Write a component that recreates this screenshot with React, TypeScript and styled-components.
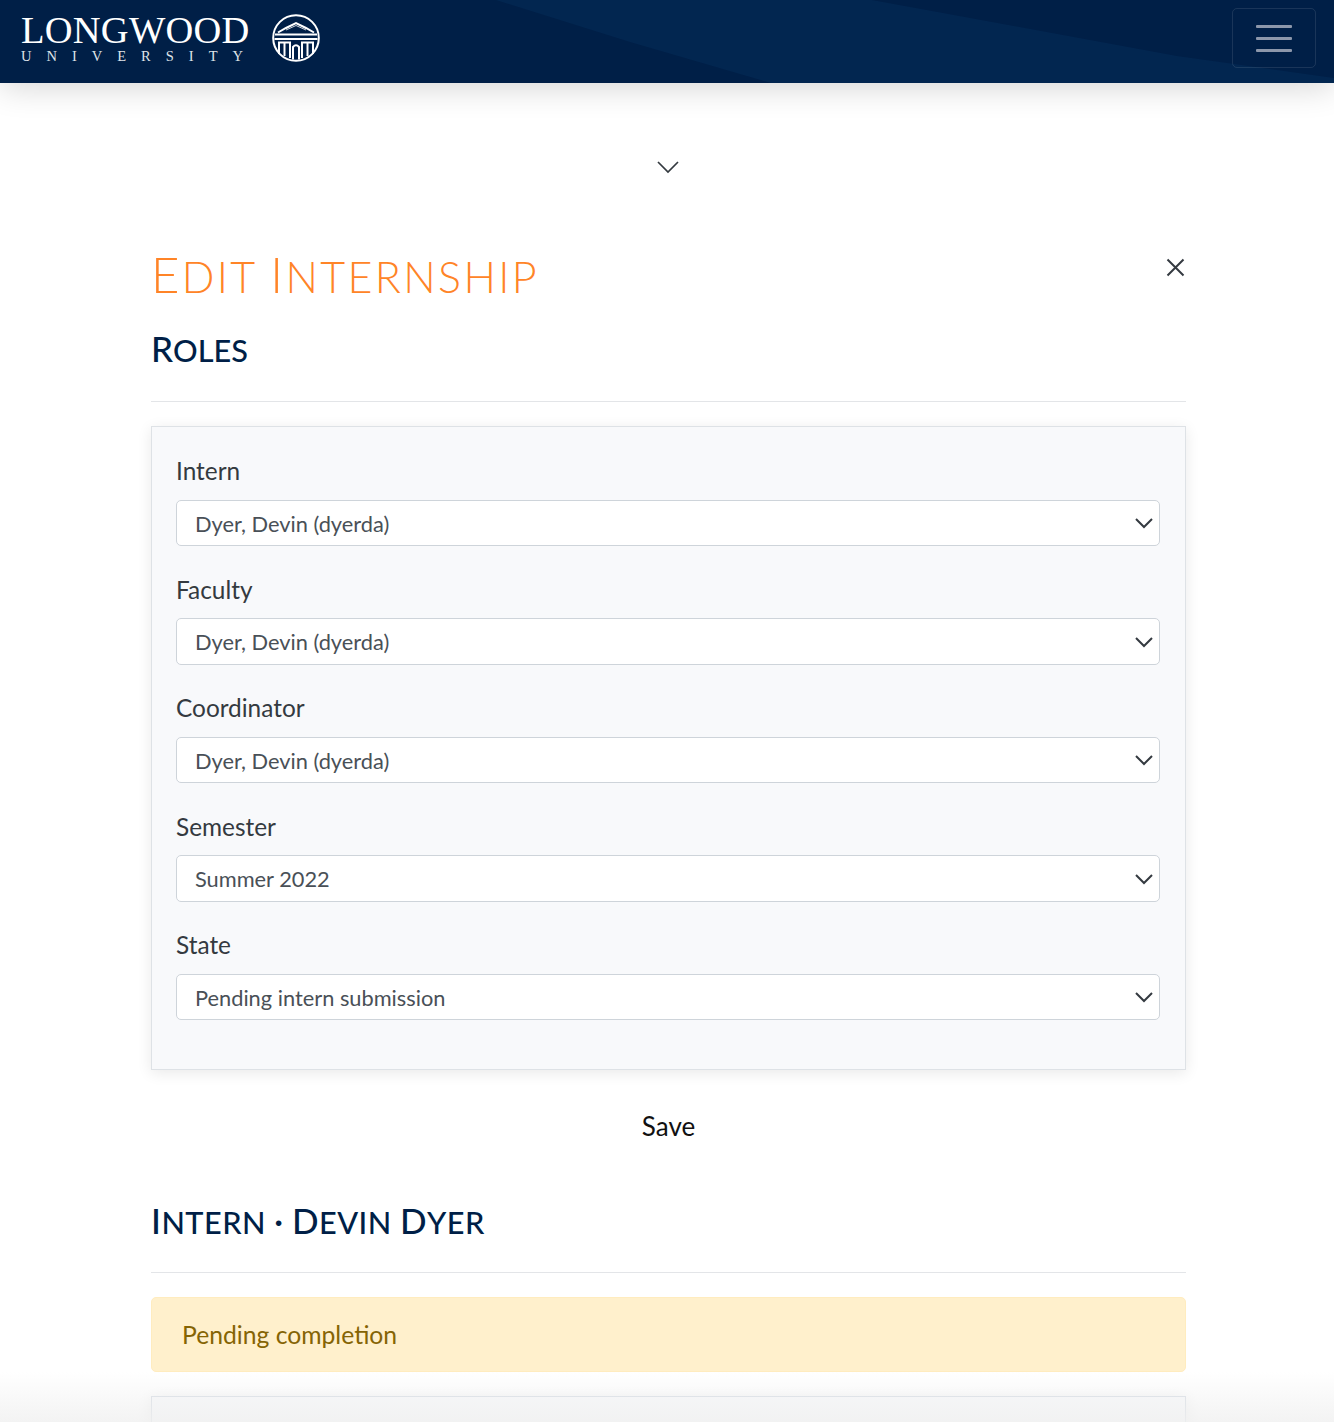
import React from 'react';
import styled, { createGlobalStyle } from 'styled-components';

type FieldData = {
  label: string;
  value: string;
};

const fields: FieldData[] = [
  { label: 'Intern', value: 'Dyer, Devin (dyerda)' },
  { label: 'Faculty', value: 'Dyer, Devin (dyerda)' },
  { label: 'Coordinator', value: 'Dyer, Devin (dyerda)' },
  { label: 'Semester', value: 'Summer 2022' },
  { label: 'State', value: 'Pending intern submission' },
];

function Seal() {
  return (
    <svg width='50' height='50' viewBox='0 0 50 50' fill='none' stroke='#fff'>
      <circle cx='25' cy='25' r='22.8' strokeWidth='2' />
      <path d='M7 19.5 L15 15 L25 10 L35 15 L43 19.5' strokeWidth='2' />
      <path d='M15 17 L25 12.5 L35 17' strokeWidth='0.8' />
      <path d='M4 21.5 H46 M3.5 26 H46.5' strokeWidth='2' />
      <path d='M8 41 V29.5 H19 V45 M13.5 29.5 V43' strokeWidth='2' />
      <path d='M42 41 V29.5 H31 V45 M36.5 29.5 V43' strokeWidth='2' />
      <path d='M22 46.5 V34 Q25 30.5 28 34 V46.5' strokeWidth='2' />
    </svg>
  );
}

function SmallCaps({ text }: { text: string }) {
  return (
    <>
      {text.split(' ').map((word, i) => (
        <React.Fragment key={i}>
          {i > 0 && ' '}
          <Cap>{word[0]}</Cap>
          {word.slice(1)}
        </React.Fragment>
      ))}
    </>
  );
}

function Field({ label, value }: FieldData) {
  return (
    <FieldWrap>
      <Label>{label}</Label>
      <SelectBox>
        <span>{value}</span>
        <svg width='18' height='12' viewBox='0 0 18 12' fill='none' stroke='#343a40' strokeWidth='2'>
          <path d='M1 2 L9 10 L17 2' />
        </svg>
      </SelectBox>
    </FieldWrap>
  );
}

export default function App() {
  return (
    <Page>
      <GlobalStyle />
      <Header>
        <Band />
        <Logo>
          <LogoText>
            <LogoName>LONGWOOD</LogoName>
            <LogoSub>UNIVERSITY</LogoSub>
          </LogoText>
          <Seal />
        </Logo>
        <Burger>
          <i />
          <i />
          <i />
        </Burger>
      </Header>
      <Toggle>
        <svg width='22' height='14' viewBox='0 0 22 14' fill='none' stroke='#343a40' strokeWidth='1.7'>
          <path d='M1 2 L11 12 L21 2' />
        </svg>
      </Toggle>
      <Main>
        <TitleRow>
          <Title>
            <SmallCaps text='Edit Internship' />
          </Title>
          <CloseIcon width='21' height='21' viewBox='0 0 21 21' fill='none' stroke='#343a40' strokeWidth='2'>
            <path d='M2.5 2.5 L18.5 18.5 M18.5 2.5 L2.5 18.5' />
          </CloseIcon>
        </TitleRow>
        <SectionHead>
          <SmallCaps text='Roles' />
        </SectionHead>
        <Divider />
        <Panel>
          {fields.map((f) => (
            <Field key={f.label} {...f} />
          ))}
        </Panel>
        <Save>Save</Save>
        <InternHead>
          <SmallCaps text='Intern · Devin Dyer' />
        </InternHead>
        <Divider />
        <Alert>Pending completion</Alert>
        <NextPanel />
      </Main>
      <BottomFade />
    </Page>
  );
}

const GlobalStyle = createGlobalStyle`
  html, body {
    margin: 0;
    padding: 0;
    background: #fff;
  }
  * {
    box-sizing: border-box;
  }
`;

const Page = styled.div`
  position: relative;
  height: 1422px;
  overflow: hidden;
  font-family: 'Lato', 'Noto Sans', sans-serif;
  color: #343a40;
`;

const Header = styled.header`
  position: relative;
  height: 83px;
  background: #001f47;
  box-shadow: 0 5px 32px rgba(0, 0, 0, 0.16);
  display: flex;
  align-items: flex-start;
  justify-content: space-between;
  padding: 8px 18px 0 21px;
  overflow: hidden;
`;

const Band = styled.div`
  position: absolute;
  inset: 0;
  background: #022650;
  clip-path: polygon(496px 0, 630px 42px, 771px 83px, 1334px 83px, 1334px 78px, 1177px 56px, 1025px 28px, 872px 0);
`;

const Logo = styled.div`
  position: relative;
  display: flex;
  align-items: flex-start;
  gap: 23px;
  margin-top: 5px;
`;

const LogoText = styled.div`
  width: 227px;
  font-family: 'Liberation Serif', serif;
  color: #fff;
  white-space: nowrap;
`;

const LogoName = styled.div`
  font-size: 38.5px;
  line-height: 34px;
  letter-spacing: 0.25px;
`;

const LogoSub = styled.div`
  font-size: 14.5px;
  line-height: 18px;
  letter-spacing: 15px;
  color: #dfe3e9;
`;

const Burger = styled.div`
  position: relative;
  width: 84px;
  height: 60px;
  border: 1px solid rgba(255, 255, 255, 0.1);
  border-radius: 5px;
  display: flex;
  flex-direction: column;
  align-items: center;
  justify-content: center;
  gap: 9px;

  i {
    display: block;
    width: 36px;
    height: 3px;
    border-radius: 1px;
    background: #8c97ab;
  }
`;

const Toggle = styled.div`
  display: flex;
  justify-content: center;
  padding: 77px 0 0 2px;
  height: 166px;
`;

const Main = styled.main`
  width: 1035px;
  margin: 0 0 0 151px;
`;

const TitleRow = styled.div`
  display: flex;
  justify-content: space-between;
  align-items: flex-start;
`;

const Title = styled.h1`
  margin: -3px 0 0 0;
  font-size: 43px;
  line-height: 56px;
  font-weight: 300;
  letter-spacing: 2.35px;
  text-transform: uppercase;
  color: #ff8427;
`;

const Cap = styled.span`
  font-size: 1.14em;
`;

const CloseIcon = styled.svg`
  margin: 8px 0 0 1px;
`;

const SectionHead = styled.h2`
  margin: 18px 0 0 0;
  height: 52px;
  font-size: 30.7px;
  line-height: 50px;
  font-weight: 500;
  text-transform: uppercase;
  color: #001f47;
`;

const InternHead = styled(SectionHead)`
  margin-top: 53px;
  height: 51px;
  letter-spacing: 0.45px;
`;

const Divider = styled.hr`
  margin: 26px 0 24px;
  border: 0;
  border-top: 1px solid #e3e5e8;
`;

const Panel = styled.section`
  height: 644px;
  padding: 28px 25px 0 24px;
  background: #f8f9fb;
  border: 1px solid #dee2e6;
  box-shadow: 0 3px 14px rgba(0, 0, 0, 0.09);
`;

const FieldWrap = styled.div`
  margin-bottom: 27.25px;
`;

const Label = styled.div`
  font-size: 24.4px;
  line-height: 31.5px;
  margin-bottom: 13.25px;
  color: #343a40;
`;

const SelectBox = styled.div`
  height: 46.5px;
  display: flex;
  align-items: center;
  justify-content: space-between;
  padding: 0 6px 0 18px;
  background: #fff;
  border: 1px solid #ced4da;
  border-radius: 5px;
  font-size: 21.8px;
  color: #495057;
`;

const Save = styled.div`
  margin-top: 40px;
  text-align: center;
  font-size: 26px;
  line-height: 32px;
  color: #111;
`;

const Alert = styled.div`
  height: 75px;
  padding: 0 30px;
  display: flex;
  align-items: center;
  background: #fff0cc;
  border: 1px solid #ffecbf;
  border-radius: 5px;
  font-size: 24.7px;
  color: #856404;
`;

const NextPanel = styled.div`
  margin-top: 24px;
  height: 200px;
  background: #f8f9fb;
  border: 1px solid #d5dbe3;
  box-shadow: 0 3px 14px rgba(0, 0, 0, 0.09);
`;

const BottomFade = styled.div`
  position: absolute;
  left: 0;
  right: 0;
  bottom: 0;
  height: 50px;
  background: linear-gradient(to bottom, rgba(240, 240, 240, 0), rgba(240, 240, 240, 0.8));
`;
